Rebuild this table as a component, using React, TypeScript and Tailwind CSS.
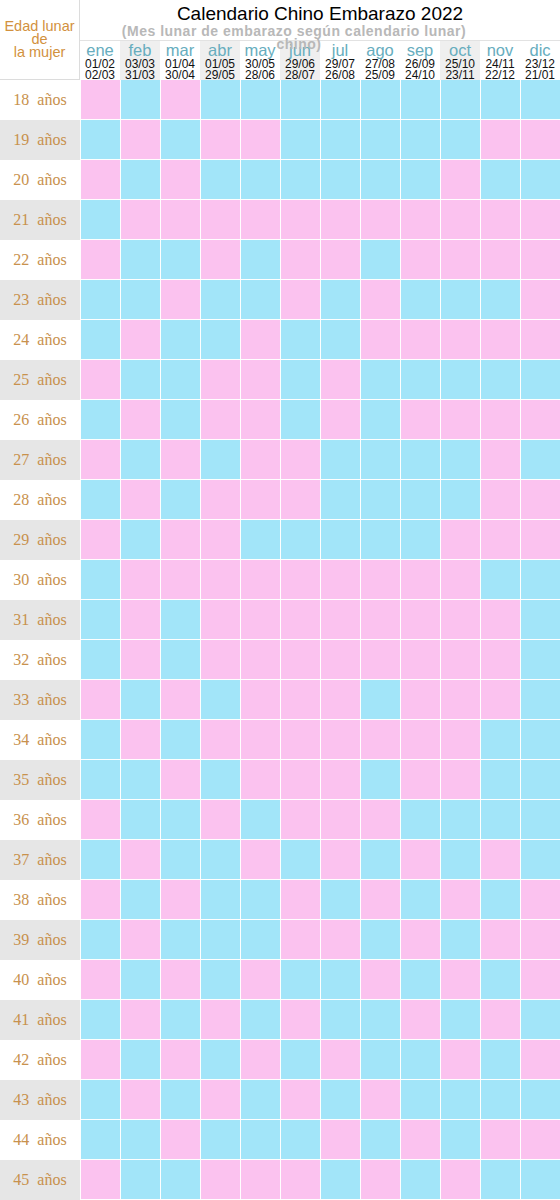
import React from 'react'

const months = [
  { name: 'ene', from: '01/02', to: '02/03', shade: false },
  { name: 'feb', from: '03/03', to: '31/03', shade: true },
  { name: 'mar', from: '01/04', to: '30/04', shade: false },
  { name: 'abr', from: '01/05', to: '29/05', shade: true },
  { name: 'may', from: '30/05', to: '28/06', shade: false },
  { name: 'jun', from: '29/06', to: '28/07', shade: true },
  { name: 'jul', from: '29/07', to: '26/08', shade: false },
  { name: 'ago', from: '27/08', to: '25/09', shade: false },
  { name: 'sep', from: '26/09', to: '24/10', shade: false },
  { name: 'oct', from: '25/10', to: '23/11', shade: true },
  { name: 'nov', from: '24/11', to: '22/12', shade: false },
  { name: 'dic', from: '23/12', to: '21/01', shade: false },
]

// P = niña (rosa), B = niño (azul), one string per age from 18 to 45
const grid = [
  'PBPBBBBBBBBB',
  'BPBPPBBBBBPP',
  'PBPBBBBBBPBB',
  'BPPPPPPPPPPP',
  'PBBPBPPBPPPP',
  'BBPBBPBPBBBP',
  'BPBBPBBPPPPP',
  'PBBPPBPBBBBB',
  'BPBPPBPBPPPP',
  'PBPBPPBBBBPB',
  'BPBPPPBBBBPP',
  'PBPPBBBBBPPP',
  'BPPPPPPPPPBB',
  'BPBPPPPPPPPB',
  'BPBPPPPPPPPB',
  'PBPBPPPBPPPB',
  'BPBPPPPPPPBB',
  'BBPBPPPBPPBB',
  'PBBPBPPPBBBB',
  'BPBBPBPBPBPB',
  'PBPBBPBPBPBP',
  'BPBBBPPBPBPP',
  'PBPBPBBPBPBP',
  'BPBPBPBBPBPB',
  'PBPBPBPBBPBP',
  'BPBPBPBPBBBB',
  'BBPBBBPBPBPP',
  'PBBPPPBPBPBB',
]

function Header() {
  return (
    <div className="flex h-20 border-b border-[#dcdcdc] bg-white">
      <div className="flex w-20 shrink-0 flex-col items-center justify-center border-r border-[#dcdcdc] text-center text-[14.5px] leading-[13px] text-[#d2913e]">
        <span>Edad lunar</span>
        <span>de</span>
        <span>la mujer</span>
      </div>
      <div className="flex flex-1 flex-col">
        <div className="flex h-[41px] flex-col items-center border-b border-[#e2e2e2] pt-[3px]">
          <div className="text-[19px] leading-[22px] text-black">Calendario Chino Embarazo 2022</div>
          <div className="relative z-10 h-[16px] pr-[52px] text-center text-[14px] font-bold leading-[13px] tracking-[0.5px] text-[#b8b8b8]">
            <div>(Mes lunar de embarazo según calendario lunar)</div>
            <div className="pl-[10px]">chino)</div>
          </div>
        </div>
        <div className="flex flex-1">
          {months.map((m) => (
            <div
              key={m.name}
              className={`flex flex-1 flex-col items-center ${m.shade ? 'bg-[#efefef]' : 'bg-white'}`}
            >
              <span className="text-[16.5px] leading-[18px] text-[#67adbe]">{m.name}</span>
              <span className="text-[12px] font-medium leading-[10.5px] text-[#111]">{m.from}</span>
              <span className="text-[12px] font-medium leading-[10.5px] text-[#111]">{m.to}</span>
            </div>
          ))}
        </div>
      </div>
    </div>
  )
}

export default function App() {
  return (
    <div className="w-[560px] bg-white font-['Liberation_Sans',Arial,sans-serif]">
      <Header />
      {grid.map((row, i) => {
        const age = 18 + i
        return (
          <div key={age} className="flex h-10">
            <div
              className={`flex w-20 shrink-0 items-center justify-center whitespace-pre font-['Liberation_Serif',serif] text-[16px] text-[#c8914d] ${
                age % 2 === 1 ? 'bg-[#e6e6e6]' : 'bg-white'
              }`}
            >
              {`${age}  años`}
            </div>
            {row.split('').map((c, j) => (
              <div
                key={j}
                className={`flex-1 border-b border-l border-white ${c === 'P' ? 'bg-[#fbc2ef]' : 'bg-[#a2e5f9]'}`}
              />
            ))}
          </div>
        )
      })}
    </div>
  )
}
